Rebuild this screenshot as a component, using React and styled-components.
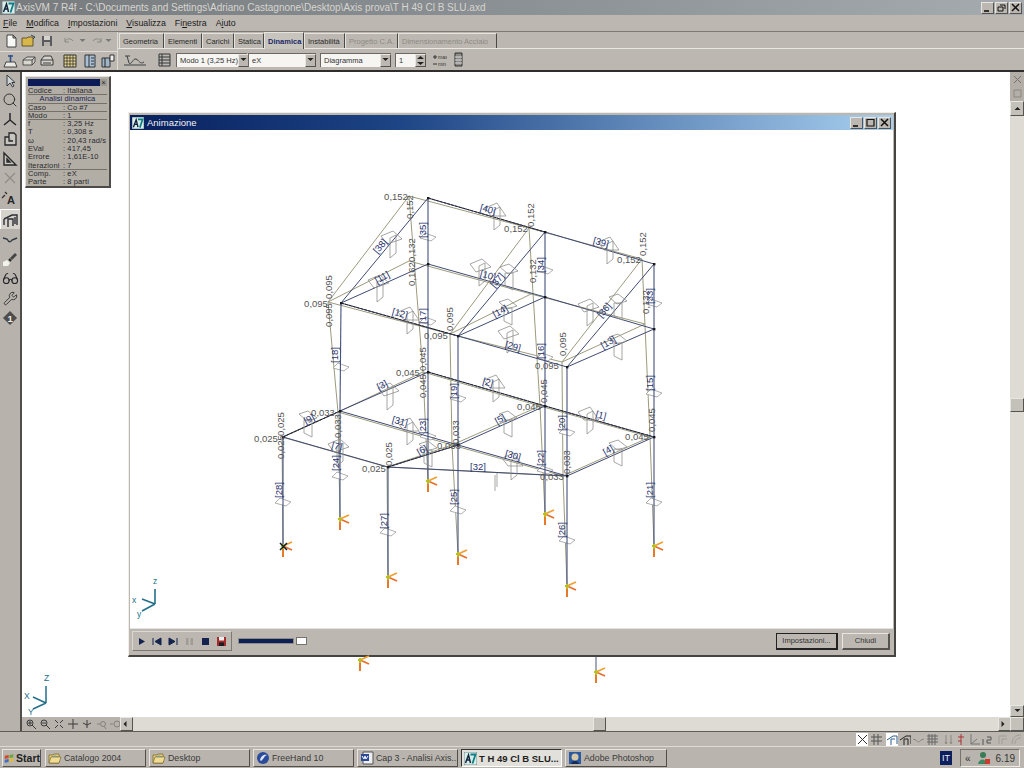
import styled, { createGlobalStyle } from "styled-components";
import { Search, Wrench, Glasses } from "lucide-react";

const GlobalStyle = createGlobalStyle`
  html, body {
    margin: 0;
    padding: 0;
    background: #b9b5ae;
  }
  * {
    box-sizing: border-box;
  }
`;

const FACE = "#bcb8b1";
const LIGHT = "#dedbd4";
const SHADOW = "#7d7a74";
const FONT = `"Liberation Sans", Arial, sans-serif`;

const raised = `
  border-top: 1px solid #e8e6e0;
  border-left: 1px solid #e8e6e0;
  border-right: 1px solid #55534f;
  border-bottom: 1px solid #55534f;
`;

const Screen = styled.div`
  width: 1024px;
  height: 768px;
  overflow: hidden;
  display: flex;
  flex-direction: column;
  background: ${FACE};
  font-family: ${FONT};
`;

const TitleBar = styled.div`
  height: 15px;
  display: flex;
  align-items: center;
  gap: 1px;
  padding: 0 2px;
  background: linear-gradient(90deg, #777b7e, #8f9599 60%, #a5abae);
`;

const TitleText = styled.div`
  flex: 1;
  color: #d7d5cf;
  font-size: 10px;
  white-space: nowrap;
`;

const CaptionButton = styled.div`
  width: 13px;
  height: 12px;
  display: flex;
  align-items: center;
  justify-content: center;
  background: ${FACE};
  ${raised}
`;

const MenuBar = styled.div`
  height: 16px;
  display: flex;
  align-items: center;
  padding-left: 3px;
  gap: 9px;
  font-size: 8.8px;
  color: #1c1c1c;
  & u {
    text-decoration: underline;
  }
`;

const Toolbars = styled.div`
  height: 41px;
  display: flex;
  border-top: 1px solid ${SHADOW};
  border-bottom: 2px solid #2f2e2c;
`;

const ToolGrid = styled.div`
  width: 118px;
  display: flex;
  flex-direction: column;
  border-right: 1px solid ${LIGHT};
`;

const ToolRow = styled.div`
  height: ${(p) => p.$h || 19}px;
  display: flex;
  align-items: center;
  padding-left: 2px;
  border-top: ${(p) => (p.$line ? `1px solid ${LIGHT}` : "none")};
`;

const Slot = styled.div`
  width: ${(p) => p.$w || 18}px;
  flex: none;
  height: 17px;
  display: flex;
  align-items: center;
  justify-content: center;
  margin-left: ${(p) => p.$ml || 0}px;
`;

const RightTools = styled.div`
  flex: 1;
  display: flex;
  flex-direction: column;
`;

const TabRow = styled.div`
  height: 17px;
  display: flex;
  align-items: flex-end;
  padding-left: 1px;
  border-bottom: 1px solid #e9e7e2;
`;

const Tab = styled.div`
  width: ${(p) => p.$w}px;
  height: ${(p) => (p.$active ? 17 : 15)}px;
  margin-bottom: ${(p) => (p.$active ? -1 : 0)}px;
  display: flex;
  align-items: center;
  padding-left: 3px;
  font-size: 7.5px;
  white-space: nowrap;
  font-weight: ${(p) => (p.$active ? 700 : 400)};
  color: ${(p) => (p.$active ? "#1c2a68" : p.$off ? "#8d8a85" : "#2a2a2a")};
  background: ${(p) => (p.$active ? "#c7c4bd" : FACE)};
  border-left: 1px solid #e5e3dd;
  border-top: 1px solid #e5e3dd;
  border-right: 1px solid #4a4946;
`;

const OptionRow = styled.div`
  flex: 1;
  display: flex;
  align-items: center;
  padding-left: 4px;
`;

const Combo = styled.div`
  width: ${(p) => p.$w}px;
  height: 14px;
  margin-left: ${(p) => p.$ml || 0}px;
  flex: none;
  display: flex;
  align-items: center;
  justify-content: space-between;
  padding-left: 3px;
  background: #f6f5f2;
  font-size: 7.5px;
  color: #333;
  white-space: nowrap;
  border-top: 1px solid #6a6864;
  border-left: 1px solid #6a6864;
`;

const ComboArrow = styled.div`
  width: 11px;
  height: 13px;
  flex: none;
  display: flex;
  align-items: center;
  justify-content: center;
  background: ${FACE};
  ${raised}
`;

const Workspace = styled.div`
  flex: 1;
  min-height: 0;
  display: flex;
`;

const LeftTools = styled.div`
  width: 22px;
  flex: none;
  display: flex;
  flex-direction: column;
  align-items: center;
  background: #b7b3ac;
  border-right: 2px solid #4f4e4b;
`;

const LeftTool = styled.div`
  width: 20px;
  height: ${(p) => p.$h || 20}px;
  flex: none;
  display: flex;
  align-items: center;
  justify-content: center;
  background: ${(p) => (p.$active ? "#d6d3cc" : "transparent")};
  border-top: ${(p) => (p.$active ? "1px solid #fff" : "none")};
  border-left: ${(p) => (p.$active ? "1px solid #fff" : "none")};
`;

const CenterColumn = styled.div`
  flex: 1;
  min-width: 0;
  display: flex;
  flex-direction: column;
`;

const Canvas = styled.div`
  flex: 1;
  position: relative;
  background: #fff;
  overflow: hidden;
`;

const InfoPanel = styled.div`
  position: absolute;
  left: 3px;
  top: 4px;
  width: 86px;
  height: 112px;
  padding: 2px;
  background: #b2aea6;
  border-right: 2px solid #4c4b48;
  border-bottom: 2px solid #4c4b48;
  border-top: 1px solid #e4e2dc;
  border-left: 1px solid #e4e2dc;
  font-size: 7.5px;
  color: #2a2a2e;
`;

const InfoHead = styled.div`
  height: 7px;
  margin-bottom: 1px;
  background: #0b1c56;
  display: flex;
  justify-content: flex-end;
`;

const InfoClose = styled.div`
  width: 7px;
  background: #9d9a93;
  color: #222;
  font-size: 7px;
  line-height: 7px;
  text-align: center;
`;

const InfoRow = styled.div`
  height: 8.3px;
  line-height: 8.3px;
  display: grid;
  grid-template-columns: ${(p) => (p.$center ? "1fr" : "35px 1fr")};
  letter-spacing: 0.1px;
  white-space: nowrap;
  text-align: ${(p) => (p.$center ? "center" : "left")};
  color: ${(p) => (p.$center ? "#1b2350" : "inherit")};
  border-bottom: ${(p) => (p.$line ? "1px solid #74716b" : "none")};
`;

const AnimWindow = styled.div`
  position: absolute;
  left: 106px;
  top: 40px;
  width: 768px;
  height: 545px;
  display: flex;
  flex-direction: column;
  padding: 2px 1px;
  background: ${FACE};
  border-right: 2px solid #454441;
  border-bottom: 2px solid #454441;
  border-left: 1px solid #efeee9;
  border-top: 1px solid #efeee9;
`;

const AnimTitle = styled.div`
  height: 15px;
  flex: none;
  display: flex;
  align-items: center;
  gap: 1px;
  padding: 0 2px;
  background: linear-gradient(90deg, #08205e, #1d4484 35%, #a8d0f0);
  color: #f4f4f4;
  font-size: 9.5px;
`;

const AnimTitleText = styled.div`
  flex: 1;
  padding-left: 2px;
`;

const ModelArea = styled.div`
  flex: 1;
  min-height: 0;
  background: #fff;
`;

const ControlBar = styled.div`
  height: 25px;
  flex: none;
  display: flex;
  align-items: center;
  padding: 0 3px 0 2px;
  border-top: 1px solid #e4e2dc;
  background: ${FACE};
`;

const PlayerPanel = styled.div`
  height: 20px;
  width: 100px;
  display: flex;
  align-items: center;
  border-top: 1px solid #dad8d2;
  border-left: 1px solid #dad8d2;
  border-right: 1px solid ${SHADOW};
  border-bottom: 1px solid ${SHADOW};
`;

const PlayerSlot = styled.div`
  width: 16px;
  height: 16px;
  flex: none;
  display: flex;
  align-items: center;
  justify-content: center;
`;

const SliderTrack = styled.div`
  width: 56px;
  height: 6px;
  margin-left: 6px;
  background: #0d1f55;
  border: 1px solid #8f8c86;
`;

const SliderThumb = styled.div`
  width: 11px;
  height: 8px;
  margin-left: 2px;
  background: #fff;
  border: 1px solid #76736d;
`;

const Spacer = styled.div`
  flex: ${(p) => (p.$h ? `0 0 ${p.$h}px` : 1)};
`;

const WinButton = styled.div`
  width: ${(p) => p.$w}px;
  height: 17px;
  margin-left: ${(p) => p.$ml || 0}px;
  display: flex;
  align-items: center;
  justify-content: center;
  font-size: 7.5px;
  color: #333;
  background: ${FACE};
  border-top: 1px solid ${(p) => (p.$def ? "#222" : "#e8e6e0")};
  border-left: 1px solid ${(p) => (p.$def ? "#222" : "#e8e6e0")};
  border-right: ${(p) => (p.$def ? "2px solid #222" : "2px solid #55534f")};
  border-bottom: ${(p) => (p.$def ? "2px solid #222" : "2px solid #55534f")};
`;

const StrayPin = styled.svg`
  position: absolute;
  left: ${(p) => p.$x}px;
  top: ${(p) => p.$y}px;
`;

const CornerTriad = styled.svg`
  position: absolute;
  left: 0;
  bottom: 0;
`;

const HScroll = styled.div`
  height: 14px;
  flex: none;
  display: flex;
  background: ${LIGHT};
`;

const ViewTools = styled.div`
  width: 98px;
  flex: none;
  display: flex;
  align-items: center;
  padding-left: 2px;
  background: #b7b3ac;
`;

const ViewTool = styled.div`
  width: 14px;
  height: 13px;
  flex: none;
  display: flex;
  align-items: center;
  justify-content: center;
`;

const ScrollButton = styled.div`
  width: ${(p) => p.$w || 13}px;
  height: ${(p) => p.$h || 14}px;
  flex: none;
  display: flex;
  align-items: center;
  justify-content: center;
  background: #c4c1ba;
  margin-left: ${(p) => p.$ml || 0}px;
  ${raised}
`;

const VScroll = styled.div`
  width: 14px;
  flex: none;
  display: flex;
  flex-direction: column;
  background: ${LIGHT};
`;

const VHead = styled.div`
  height: 29px;
  flex: none;
  display: flex;
  flex-direction: column;
  background: #b3afa8;
`;

const VHeadItem = styled.div`
  height: 14px;
  display: flex;
  align-items: center;
  justify-content: center;
`;

const StatusBar = styled.div`
  height: 16px;
  flex: none;
  display: flex;
  align-items: center;
  padding-left: 22px;
  background: ${FACE};
  border-top: 1px solid #5e5c58;
  border-bottom: 1px solid #dedbd4;
`;

const StatusIcon = styled.div`
  width: ${(p) => p.$w || 12}px;
  height: 13px;
  flex: none;
  margin-left: ${(p) => p.$ml || 0}px;
  display: flex;
  align-items: center;
  justify-content: center;
  background: ${(p) => (p.$on ? "#fff" : "transparent")};
`;

const Taskbar = styled.div`
  height: 21px;
  flex: none;
  display: flex;
  align-items: center;
  padding: 1px 4px 0 2px;
  background: #b9b5ae;
`;

const StartButton = styled.div`
  width: 39px;
  height: 18px;
  display: flex;
  align-items: center;
  gap: 2px;
  padding-left: 1px;
  font-size: 10.5px;
  font-weight: 700;
  color: #222;
  ${raised}
`;

const TaskButton = styled.div`
  width: ${(p) => p.$w || 101}px;
  height: 18px;
  margin-left: ${(p) => p.$ml || 3}px;
  flex: none;
  display: flex;
  align-items: center;
  gap: 2px;
  padding-left: 2px;
  font-size: ${(p) => (p.$active ? 9.5 : 8.8)}px;
  font-weight: ${(p) => (p.$active ? 700 : 400)};
  white-space: nowrap;
  overflow: hidden;
  color: ${(p) => (p.$active ? "#1e1e1e" : "#3a3a3a")};
  background: ${(p) => (p.$active ? "#e2e0da" : "transparent")};
  border-top: 1px solid ${(p) => (p.$active ? "#333" : "#e8e6e0")};
  border-left: 1px solid ${(p) => (p.$active ? "#333" : "#e8e6e0")};
  border-right: 1px solid ${(p) => (p.$active ? "#fff" : "#4f4e4a")};
  border-bottom: 1px solid ${(p) => (p.$active ? "#fff" : "#4f4e4a")};
  & > svg {
    flex: none;
  }
`;

const LangBox = styled.div`
  width: 12px;
  height: 14px;
  margin-left: 273px;
  flex: none;
  background: #0c2060;
  color: #f0f0f0;
  font-size: 9px;
  line-height: 14px;
  text-align: center;
`;

const Tray = styled.div`
  width: 60px;
  height: 18px;
  margin-left: 8px;
  flex: none;
  display: flex;
  align-items: center;
  padding-left: 4px;
  gap: 5px;
  font-size: 10px;
  color: #333;
  border-top: 1px solid #77746e;
  border-left: 1px solid #77746e;
  border-right: 1px solid #eeece7;
  border-bottom: 1px solid #eeece7;
`;

const Ico = ({ w = 14, h = 14, children }) => (
  <svg width={w} height={h} viewBox={`0 0 ${w} ${h}`} fill="none">
    {children}
  </svg>
);

const Arrow = ({ dir = "down", c = "#222" }) => {
  const pts = {
    down: "0,0 6,0 3,3",
    up: "0,3 6,3 3,0",
    left: "3,-1 3,5 0,2",
    right: "0,-1 0,5 3,2",
  };
  return (
    <svg width="7" height="6" viewBox="-0.5 -1 7 6">
      <polygon points={pts[dir]} fill={c} />
    </svg>
  );
};

const LogoAV = ({ s = 13 }) => (
  <svg width={s} height={s} viewBox="0 0 13 13">
    <rect width="13" height="13" fill="#d7efe9" stroke="#44515a" strokeWidth="0.6" />
    <path d="M1.5 11 L4.5 3 L6.5 11 M2.8 8 H6" stroke="#16243f" strokeWidth="1.5" fill="none" />
    <path d="M6.5 2.5 H11.5 L8.5 11.5" stroke="#0c7d85" strokeWidth="1.8" fill="none" />
  </svg>
);

const FolderIcon = () => (
  <Ico w={14} h={14}>
    <path d="M1 4 H5 L6 3 H11 V12 H1 Z" fill="#ecd27a" stroke="#7b6a2e" strokeWidth="0.8" />
    <circle cx="7" cy="8" r="3.3" fill="#9cc6e8" stroke="#5b7fa0" strokeWidth="0.6" />
    <path d="M1 12 L3 6 H13 L11 12 Z" fill="#efdc92" stroke="#7b6a2e" strokeWidth="0.7" />
  </Ico>
);

const Support = ({ x, y }) => (
  <g transform={`translate(${x} ${y})`}>
    <path d="M0 1 V11" stroke="#e8792b" strokeWidth="2" />
    <path d="M0 0 L9 -4" stroke="#f0a030" strokeWidth="1.8" />
    <path d="M0 0 L9 4" stroke="#e8702a" strokeWidth="1.8" />
    <path d="M-2 0 H2 M0 -2 V3" stroke="#b9bf20" strokeWidth="2" />
  </g>
);

const TOP = [[428, 199], [545, 233], [654, 265]];
const UP = [[428, 265], [545, 298], [654, 330]];
const FRONT = [[341, 304], [458, 337], [567, 368]];
const LOWB = [[428, 373], [545, 407], [654, 438]];
const LOWM = [[340, 412], [458, 446], [567, 477]];
const LOWF = [[283, 438], [388, 468]];
const BASE = {
  a: [283, 547],
  b: [340, 520],
  c: [388, 578],
  d: [428, 482],
  e: [458, 555],
  f: [545, 515],
  g: [567, 587],
  h: [654, 547],
};

const dTOP = [[409, 197], [529, 229], [642, 260]];
const dUP = [[409, 262], [531, 295], [645, 325]];
const dFRONT = [[328, 303], [450, 335], [562, 363]];
const dLOWB = [[423, 373], [540, 407], [650, 438]];
const dLOWM = [[338, 413], [452, 446], [563, 477]];
const dLOWF = [[282, 438], [387, 468]];

const frameLines = (t, u, f, lb, lm, lf) => [
  [t[0], t[1]], [t[1], t[2]],
  [u[0], u[1]], [u[1], u[2]],
  [f[0], f[1]], [f[1], f[2]],
  [f[0], t[0]], [f[1], t[1]], [f[2], t[2]],
  [f[0], u[0]], [f[1], u[1]], [f[2], u[2]],
  [lb[0], lb[1]], [lb[1], lb[2]],
  [lm[0], lm[1]], [lm[1], lm[2]],
  [lm[0], lb[0]], [lm[1], lb[1]], [lm[2], lb[2]],
  [lf[0], lm[0]], [lf[1], lm[1]], [lf[0], lf[1]], [lf[1], lm[2]],
];

const columns = (t, f, lb, lm, lf) => [
  [t[0], lb[0]], [t[1], lb[1]], [t[2], lb[2]],
  [f[0], lm[0]], [f[1], lm[1]], [f[2], lm[2]],
  [lb[0], BASE.d], [lb[1], BASE.f], [lb[2], BASE.h],
  [lm[0], BASE.b], [lm[1], BASE.e], [lm[2], BASE.g],
  [lf[0], BASE.a], [lf[1], BASE.c],
];

const VALUES_H = [
  ["0,152", 396, 197], ["0,095", 316, 304], ["0,095", 436, 336], ["0,045", 408, 373],
  ["0,033", 323, 413], ["0,025", 266, 439], ["0,025", 374, 469], ["0,033", 449, 446],
  ["0,152", 516, 229], ["0,152", 629, 260], ["0,095", 547, 366], ["0,045", 529, 407],
  ["0,045", 637, 437], ["0,033", 552, 477],
];

const VALUES_V = [
  ["0,152", 409, 208], ["0,095", 328, 288], ["0,095", 328, 316], ["0,132", 411, 251],
  ["0,162", 411, 275], ["0,095", 449, 320], ["0,045", 422, 360], ["0,045", 422, 387],
  ["0,152", 530, 216], ["0,132", 532, 272], ["0,095", 562, 345], ["0,152", 642, 245],
  ["0,132", 645, 303], ["0,045", 543, 392], ["0,045", 651, 421], ["0,033", 337, 427],
  ["0,025", 280, 425], ["0,025", 280, 448], ["0,025", 388, 455], ["0,033", 455, 433],
  ["0,033", 566, 463],
];

const BEAM_LABELS = [
  ["[38]", 380, 247, -50], ["[11]", 382, 278, -28], ["[12]", 400, 314, 15], ["[17]", 422, 317, -90],
  ["[35]", 422, 231, -90], ["[18]", 334, 356, -90], ["[40]", 488, 210, 15], ["[34]", 540, 266, -90],
  ["[39]", 601, 243, 15], ["[33]", 649, 297, -90], ["[10]", 488, 276, 15], ["[37]", 497, 281, -50],
  ["[14]", 500, 312, -30], ["[36]", 604, 311, -50], ["[29]", 513, 347, 15], ["[16]", 540, 352, -90],
  ["[13]", 608, 343, -30], ["[3]", 382, 386, -28], ["[2]", 488, 383, 15], ["[1]", 601, 416, 15],
  ["[5]", 500, 420, -30], ["[31]", 400, 422, 15], ["[23]", 422, 427, -90], ["[19]", 453, 392, -90],
  ["[20]", 561, 424, -90], ["[15]", 649, 384, -90], ["[9]", 309, 420, -28], ["[7]", 337, 447, 15],
  ["[24]", 335, 464, -90], ["[6]", 422, 451, -30], ["[4]", 608, 451, -30], ["[30]", 513, 456, 15],
  ["[22]", 540, 459, -90], ["[32]", 478, 467, 0], ["[28]", 278, 491, -90], ["[27]", 383, 522, -90],
  ["[25]", 453, 498, -90], ["[26]", 561, 531, -90], ["[21]", 649, 491, -90],
];

const COLUMN_MARKS = [
  [341, 368], [428, 238], [545, 271], [654, 304], [428, 322], [545, 358], [458, 399], [567, 433],
  [654, 394], [340, 477], [283, 503], [388, 533], [458, 511], [567, 541], [654, 503], [428, 437], [545, 471],
];

const BEAM_MARKS_A = [
  [393, 244, 1], [380, 288, 1], [410, 320, 0], [497, 216, 0], [610, 250, 0], [510, 339, 1], [482, 272, 1],
  [590, 312, 1], [390, 396, 1], [496, 388, 0], [590, 420, 0], [410, 431, 0], [340, 452, 1], [514, 466, 0],
];

const BEAM_MARKS_B = [
  [511, 280, 0], [620, 310, 0], [510, 315, 0], [620, 350, 0], [510, 427, 0], [620, 456, 0], [310, 427, 0], [430, 457, 0],
];

const line = ([a, b], i, color, width, dash) => (
  <line
    key={i}
    x1={a[0]}
    y1={a[1]}
    x2={b[0]}
    y2={b[1]}
    stroke={color}
    strokeWidth={width}
    strokeDasharray={dash}
  />
);

const Model = () => {
  const nodes = [...TOP, ...UP, ...FRONT, ...LOWB, ...LOWM, ...LOWF];
  return (
    <svg width="764" height="498" viewBox="130 131 764 498" style={{ display: "block" }}>
      {frameLines(dTOP, dUP, dFRONT, dLOWB, dLOWM, dLOWF).map((l, i) => line(l, `d${i}`, "#9c9b7c", 1))}
      {columns(dTOP, dFRONT, dLOWB, dLOWM, dLOWF).map((l, i) => line(l, `dc${i}`, "#9c9b7c", 1))}
      {COLUMN_MARKS.map(([x, y], i) => (
        <polygon
          key={`cm${i}`}
          points={`${x - 8},${y + 1} ${x - 3},${y - 4} ${x + 8},${y} ${x + 3},${y + 4}`}
          fill="#fff"
          stroke="#9a9a98"
          strokeWidth="0.8"
        />
      ))}
      {frameLines(TOP, UP, FRONT, LOWB, LOWM, LOWF).map((l, i) => line(l, `b${i}`, "#3f4a73", 1))}
      {[[LOWB[0], LOWB[1]], [LOWB[1], LOWB[2]], [FRONT[0], FRONT[1]], [TOP[0], TOP[1]], [LOWF[0], LOWM[0]], [LOWF[1], LOWM[1]]].map((l, i) =>
        line(l, `k${i}`, "#25252c", 1, "3 1"),
      )}
      {columns(TOP, FRONT, LOWB, LOWM, LOWF).map((l, i) => line(l, `c${i}`, "#45507c", 1.1))}
      {BEAM_MARKS_A.map(([x, y, k], i) => (
        <g key={`ma${i}`} fill="none" stroke="#8f8f8d" strokeWidth="0.8">
          <polygon points={`${x - 12},${y - 7} ${x},${y - 12} ${x + 9},${y + (k ? -4 : 1)} ${x - 6},${y + 1}`} />
          <polygon points={`${x - 3},${y - 5} ${x + 3},${y - 8} ${x + 3},${y + 10} ${x - 3},${y + 15}`} />
        </g>
      ))}
      {BEAM_MARKS_B.map(([x, y], i) => (
        <g key={`mb${i}`} fill="none" stroke="#8f8f8d" strokeWidth="0.8">
          <polygon points={`${x - 11},${y - 12} ${x - 2},${y - 15} ${x + 7},${y - 8} ${x - 3},${y - 5}`} />
          <polygon points={`${x - 6},${y - 6} ${x + 2},${y - 6} ${x + 2},${y + 11} ${x - 6},${y + 7}`} />
        </g>
      ))}
      {nodes.map(([x, y], i) => (
        <rect key={`n${i}`} x={x - 1} y={y - 1} width="2.4" height="2.4" fill="#1a1a1e" />
      ))}
      {VALUES_H.map(([t, x, y], i) => (
        <text key={`vh${i}`} x={x} y={y + 3.5} textAnchor="middle" fontSize="9.5" fill="#555" fontFamily={FONT}>
          {t}
        </text>
      ))}
      {VALUES_V.map(([t, x, y], i) => (
        <text
          key={`vv${i}`}
          x={x}
          y={y}
          dy="3.5"
          textAnchor="middle"
          fontSize="9.5"
          fill="#555"
          fontFamily={FONT}
          transform={`rotate(-90 ${x} ${y})`}
        >
          {t}
        </text>
      ))}
      {BEAM_LABELS.map(([t, x, y, r], i) => (
        <text
          key={`bl${i}`}
          x={x}
          y={y}
          dy="3.5"
          textAnchor="middle"
          fontSize="9.5"
          fill="#28336e"
          fontFamily={FONT}
          transform={`rotate(${r} ${x} ${y})`}
        >
          {t}
        </text>
      ))}
      <path d="M495 476 V492 M497 474 V488" stroke="#8f8f8d" strokeWidth="0.8" />
      {Object.values(BASE).map(([x, y], i) => (
        <Support key={`s${i}`} x={x} y={y} />
      ))}
      <path d="M280 544 L287 551 M287 544 L280 551" stroke="#10202a" strokeWidth="1.5" />
      <g stroke="#236f8a" strokeWidth="1.6" fill="none">
        <path d="M155 605 V590 M155 605 L142 600 M155 605 L142 612" />
      </g>
      <g fill="#236f8a" fontSize="8.5" fontFamily={FONT}>
        <text x="153" y="585">z</text>
        <text x="132" y="604">x</text>
        <text x="137" y="618">y</text>
      </g>
    </svg>
  );
};

const leftIcons = [
  <Ico key="a"><path d="M4 1 V12 L7 9 L9.5 13 L11 12 L8.8 8.5 H12 Z" fill="#cfd2d0" stroke="#25303a" strokeWidth="0.9" /></Ico>,
  <Search key="b" size={16} color="#2b2b2b" strokeWidth={1.4} />,
  <Ico key="c" w={16} h={16}><path d="M8 1 V8 L2 13 M8 8 L14 13" stroke="#26262a" strokeWidth="1.5" /></Ico>,
  <Ico key="d" w={16} h={16}><path d="M3 6 H7 V2 H12 L14 4 V14 H3 Z M7 6 V10 H11" stroke="#28282a" strokeWidth="1.3" fill="#c9c6bf" /></Ico>,
  <Ico key="e" w={16} h={16}><path d="M2 2 V14 H14 Z M5 8 V11 H8 Z" stroke="#27272a" strokeWidth="1.4" fill="#c9c6bf" /></Ico>,
  <Ico key="f" w={16} h={16}><path d="M3 3 L13 13 M13 3 L3 13" stroke="#8f8c86" strokeWidth="1.2" /></Ico>,
  <Ico key="g" w={18} h={16}>
    <path d="M1 8 L4 5 M4 2 L6 4" stroke="#333" strokeWidth="1.3" />
    <text x="6" y="14" fontSize="11" fontWeight="700" fontFamily={FONT} fill="#26262a">A</text>
  </Ico>,
  <Ico key="h" w={16} h={16}><path d="M1 7 L9 3 H14 V13 M5 15 V7 H10 V14 M1 7 V13 M12 5 V12" stroke="#2e3036" strokeWidth="1.4" fill="none" /></Ico>,
  <Ico key="i" w={16} h={16}><path d="M1 7 L5 8 C7 12 9 11 10 9 L15 7" stroke="#2d3a44" strokeWidth="1.4" /></Ico>,
  <Ico key="j" w={16} h={16}><path d="M8 7 L13 2 L15 4 L10 9 Z" fill="#444" /><path d="M1 15 V11 L5 9 L8 12 L6 15 Z" fill="#f2f1ec" /><path d="M7 8 L9 10" stroke="#222" strokeWidth="2" /></Ico>,
  <Glasses key="k" size={17} color="#26262a" strokeWidth={1.5} />,
  <Wrench key="l" size={15} color="#2a2a2c" strokeWidth={1.4} />,
  <Ico key="m" w={16} h={16}>
    <polygon points="8,1 15,8 8,15 1,8" fill="#4e4d4b" />
    <text x="5.5" y="11.5" fontSize="9.5" fontWeight="700" fontFamily={FONT} fill="#eee">1</text>
  </Ico>,
];

const viewIcons = ["M5 5 m-3 0 a3 3 0 1 0 6 0 a3 3 0 1 0 -6 0 M7 7 L11 11 M3 5 H7 M5 3 V7",
  "M5 5 m-3 0 a3 3 0 1 0 6 0 a3 3 0 1 0 -6 0 M7 7 L11 11 M3 5 H7",
  "M2 2 L5 5 M10 2 L7 5 M2 10 L5 7 M10 10 L7 7",
  "M6 1 V11 M1 6 H11",
  "M6 2 V10 M2 5 L6 7 L10 5",
  "M2 6 H5 M8 6 m-2.5 0 a2.5 2.5 0 1 0 5 0 a2.5 2.5 0 1 0 -5 0 M9 8 L11 11",
  "M8 6 m-3 0 a3 3 0 1 0 6 0 a3 3 0 1 0 -6 0 M1 6 H4"];

const statusIcons = [
  { on: true, ml: 0, d: "M2 2 L11 11 M11 2 L2 11", c: "#333" },
  { ml: 2, d: "M4 1 V12 M8 1 V12 M1 4 H12 M1 8 H12", c: "#555" },
  { on: true, ml: 4, d: "M1 7 L7 3 H11 V11 M5 12 V6 H9", c: "#2a5a8a" },
  { ml: 1, d: "M1 7 L7 3 H12 V11 M5 12 V6 H9 V12", c: "#222" },
  { ml: 1, d: "M1 6 L4 7 C6 10 8 9 9 7 L12 6", c: "#8a8882" },
  { ml: 2, d: "M1 3 H12 M1 6 H12 M1 9 H12 M3 1 V12 M6 1 V12 M9 1 V12", c: "#666" },
  { ml: 4, d: "M4 2 V10 M9 2 V10 M3 9 L4 11 L5 9 M8 9 L9 11 L10 9", c: "#8a8882" },
  { ml: 1, d: "M6 1 V12 M3 4 H9 M3 8 H6", c: "#a33" },
  { ml: 1, d: "M3 1 V11 H12 M3 11 L9 6", c: "#777" },
  { ml: 1, d: "M2 12 V6 M6 4 H10 V7 H6 V10 H10", c: "#555" },
  { ml: 4, d: "M2 11 V3 H10 M5 11 V6 H10", c: "#a09d96" },
  { ml: 1, d: "M2 11 C2 5 5 2 11 2 M5 11 C5 7 7 5 11 5", c: "#a09d96" },
];

const info = [
  ["Codice", ": Italiana"],
  ["Analisi dinamica"],
  ["Caso", ": Co #7"],
  ["Modo", ": 1"],
  ["f", ": 3,25 Hz"],
  ["T", ": 0,308 s"],
  ["ω", ": 20,43 rad/s"],
  ["EVal", ": 417,45"],
  ["Errore", ": 1,61E-10"],
  ["Iterazioni", ": 7"],
  ["Comp.", ": eX"],
  ["Parte", ": 8 parti"],
];

const tabs = [
  ["Geometria", 45],
  ["Elementi", 38],
  ["Carichi", 32],
  ["Statica", 30],
  ["Dinamica", 40, "active"],
  ["Instabilità", 41],
  ["Progetto C.A.", 53, "off"],
  ["Dimensionamento Acciaio", 99, "off"],
];

export default function App() {
  return (
    <Screen>
      <GlobalStyle />
      <TitleBar>
        <LogoAV />
        <TitleText>
          AxisVM 7 R4f - C:\Documents and Settings\Adriano Castagnone\Desktop\Axis prova\T H 49 Cl B SLU.axd
        </TitleText>
        <CaptionButton><Ico w={9} h={9}><path d="M1 8 H6" stroke="#111" strokeWidth="1.6" /></Ico></CaptionButton>
        <CaptionButton><Ico w={9} h={9}><path d="M3 2 H8 V6 M1 4 H6 V8 H1 Z" stroke="#111" strokeWidth="1" /></Ico></CaptionButton>
        <CaptionButton><Ico w={9} h={9}><path d="M1 1 L8 8 M8 1 L1 8" stroke="#111" strokeWidth="1.5" /></Ico></CaptionButton>
      </TitleBar>

      <MenuBar>
        <span><u>F</u>ile</span>
        <span><u>M</u>odifica</span>
        <span><u>I</u>mpostazioni</span>
        <span><u>V</u>isualizza</span>
        <span>Fi<u>n</u>estra</span>
        <span>A<u>i</u>uto</span>
      </MenuBar>

      <Toolbars>
        <ToolGrid>
          <ToolRow $h={19}>
            <Slot><Ico><path d="M3 1 H9 L12 4 V13 H3 Z M9 1 V4 H12" fill="#f8f8f6" stroke="#333" strokeWidth="0.9" /></Ico></Slot>
            <Slot><Ico w={16} h={14}><path d="M1 4 H6 L7 3 H12 V12 H1 Z" fill="#d8b64a" stroke="#4b4020" strokeWidth="0.8" /><path d="M10 1 L14 3 L12 5" stroke="#345" strokeWidth="1" /></Ico></Slot>
            <Slot><Ico><path d="M2 2 H12 V12 H2 Z" fill="#5a5a60" /><path d="M4 2 H10 V6 H4 Z" fill="#d6d3cc" /><path d="M4 8 H10 V12 H4 Z" fill="#b4b1aa" /></Ico></Slot>
            <Slot $ml={5} $w={15}><Ico w={12} h={10}><path d="M2 6 C3 2 8 2 10 5 M2 2 V6 H6" stroke="#8b8a85" strokeWidth="1" /></Ico></Slot>
            <Slot $w={13}><Arrow c="#777" /></Slot>
            <Slot $w={15}><Ico w={12} h={10}><path d="M10 6 C9 2 4 2 2 5 M10 2 V6 H6" stroke="#8b8a85" strokeWidth="1" /></Ico></Slot>
            <Slot $w={9}><Arrow c="#777" /></Slot>
          </ToolRow>
          <ToolRow $h={20} $line>
            <Slot><Ico w={16} h={16}><path d="M3 9 H12 L14 14 H1 Z" fill="#e9e8e3" stroke="#333" strokeWidth="0.9" /><path d="M5 3 H10 M7.5 2 V9" stroke="#2e4f88" strokeWidth="1.6" /></Ico></Slot>
            <Slot><Ico w={16} h={14}><path d="M2 6 L6 3 H14 L11 6 Z M2 6 V11 H11 V6 M11 11 L14 8 V3" fill="#d9d6cf" stroke="#333" strokeWidth="0.8" /></Ico></Slot>
            <Slot><Ico w={16} h={14}><path d="M2 6 L5 2 H12 L14 6 V11 H2 Z M2 6 H14 M4 9 H12" fill="#d4d1ca" stroke="#2c2c2c" strokeWidth="0.9" /></Ico></Slot>
            <Slot $ml={4} $w={20}><Ico><path d="M1 1 H13 V13 H1 Z" fill="#e9d88c" stroke="#333" /><path d="M4 1 V13 M7 1 V13 M10 1 V13 M1 4 H13 M1 7 H13 M1 10 H13" stroke="#333" strokeWidth="0.8" /></Ico></Slot>
            <Slot $w={19}><Ico><path d="M2 1 H12 V13 H2 Z" fill="#a7c0d6" stroke="#333" /><path d="M6 1 V13 M8 4 H11 M8 7 H11 M8 10 H11" stroke="#222" strokeWidth="0.9" /></Ico></Slot>
            <Slot $w={18}><Ico><path d="M1 4 H9 V13 H1 Z" fill="#9fb6c8" stroke="#333" /><path d="M9 1 H13 V7 H9 Z" fill="#eee" stroke="#333" /><path d="M4 4 V13" stroke="#222" /></Ico></Slot>
          </ToolRow>
        </ToolGrid>
        <RightTools>
          <TabRow>
            {tabs.map(([name, w, st]) => (
              <Tab key={name} $w={w} $active={st === "active"} $off={st === "off"}>{name}</Tab>
            ))}
          </TabRow>
          <OptionRow>
            <Slot $w={26}><Ico w={24} h={14}><path d="M1 12 H23 M2 3 H7 M4 3 L6 10 C8 13 10 5 13 6 C16 7 17 12 21 9" stroke="#3c4044" strokeWidth="1" /></Ico></Slot>
            <Slot $ml={8} $w={18}><Ico><path d="M1 1 H12 V13 H1 Z M4 1 V13 M1 4 H12 M1 7 H12 M1 10 H12" stroke="#33363a" strokeWidth="1" /></Ico></Slot>
            <Combo $w={71} $ml={2}>Modo 1 (3,25 Hz)<ComboArrow><Arrow /></ComboArrow></Combo>
            <Combo $w={68} $ml={1}>eX<ComboArrow><Arrow /></ComboArrow></Combo>
            <Combo $w={71} $ml={4}>Diagramma<ComboArrow><Arrow /></ComboArrow></Combo>
            <Combo $w={31} $ml={4}>1<ComboArrow><Ico w={7} h={11}><path d="M0 4 L3.5 1 L7 4 Z M0 7 H7 L3.5 10 Z" fill="#222" /></Ico></ComboArrow></Combo>
            <Slot $ml={6} $w={15}><Ico w={15} h={14}><path d="M1 4 H5 M3 2 V6 M1 11 H5" stroke="#333" strokeWidth="1" /><text x="6" y="6" fontSize="5" fontFamily={FONT} fill="#333">max</text><text x="6" y="13" fontSize="5" fontFamily={FONT} fill="#333">min</text></Ico></Slot>
            <Slot $ml={7} $w={9}><Ico w={9} h={15}><path d="M1 1 H8 V14 H1 Z" fill="#8d8b86" stroke="#333" /><path d="M1 5 H8 M1 8 H8 M1 11 H8" stroke="#ddd" /></Ico></Slot>
          </OptionRow>
        </RightTools>
      </Toolbars>

      <Workspace>
        <LeftTools>
          {leftIcons.map((icon, i) => (
            <LeftTool key={i} $active={i === 7} $h={i === 0 ? 18 : i === 5 ? 18 : i === 6 ? 22 : 19.8}>
              {icon}
            </LeftTool>
          ))}
        </LeftTools>
        <CenterColumn>
          <Canvas>
            <InfoPanel>
              <InfoHead><InfoClose>×</InfoClose></InfoHead>
              {info.map(([k, v], i) => (
                <InfoRow key={k} $center={!v} $line={i < 4 || i === 9}>
                  <span>{k}</span>
                  {v && <span>{v}</span>}
                </InfoRow>
              ))}
            </InfoPanel>

            <AnimWindow>
              <AnimTitle>
                <LogoAV s={12} />
                <AnimTitleText>Animazione</AnimTitleText>
                <CaptionButton><Ico w={9} h={9}><path d="M1 8 H6" stroke="#111" strokeWidth="1.6" /></Ico></CaptionButton>
                <CaptionButton><Ico w={9} h={9}><path d="M1 1.5 H8 V8 H1 Z" stroke="#111" strokeWidth="1.2" /></Ico></CaptionButton>
                <CaptionButton><Ico w={9} h={9}><path d="M1 1 L8 8 M8 1 L1 8" stroke="#111" strokeWidth="1.5" /></Ico></CaptionButton>
              </AnimTitle>
              <ModelArea><Model /></ModelArea>
              <ControlBar>
                <PlayerPanel>
                  <PlayerSlot><Ico w={9} h={9}><path d="M2 1 L8 4.5 L2 8 Z" fill="#15244e" /></Ico></PlayerSlot>
                  <PlayerSlot><Ico w={10} h={9}><path d="M1 1 V8 M9 1 L3 4.5 L9 8 Z" stroke="#15244e" fill="#15244e" /></Ico></PlayerSlot>
                  <PlayerSlot><Ico w={10} h={9}><path d="M9 1 V8 M1 1 L7 4.5 L1 8 Z" stroke="#15244e" fill="#15244e" /></Ico></PlayerSlot>
                  <PlayerSlot><Ico w={9} h={9}><path d="M1 1 H3.5 V8 H1 Z M5.5 1 H8 V8 H5.5 Z" fill="#9f9c95" /></Ico></PlayerSlot>
                  <PlayerSlot><Ico w={9} h={9}><path d="M1 1 H8 V8 H1 Z" fill="#15244e" /></Ico></PlayerSlot>
                  <PlayerSlot><Ico w={11} h={11}><path d="M1 1 H10 V10 H1 Z" fill="#a52a2a" /><path d="M3 1 H8 V4.5 H3 Z" fill="#eee" /><path d="M3 6.5 H8 V10 H3 Z" fill="#1c1c22" /></Ico></PlayerSlot>
                </PlayerPanel>
                <SliderTrack />
                <SliderThumb />
                <Spacer />
                <WinButton $w={62} $def>Impostazioni...</WinButton>
                <WinButton $w={48} $ml={4}>Chiudi</WinButton>
              </ControlBar>
            </AnimWindow>

            <StrayPin $x={333} $y={582} width="16" height="18" viewBox="355 654 16 18">
              <Support x={360} y={660} />
            </StrayPin>
            <StrayPin $x={568} $y={585} width="16" height="28" viewBox="590 657 16 28">
              <path d="M596 657 V670" stroke="#4b5378" />
              <Support x={596} y={672} />
            </StrayPin>

            <CornerTriad width="60" height="50" viewBox="0 0 60 50">
              <path d="M24 36 V19 M24 36 L11 30 M24 36 L11 42" stroke="#236f8a" strokeWidth="1.5" fill="none" />
              <text x="22" y="14" fontSize="8.5" fill="#236f8a" fontFamily={FONT}>Z</text>
              <text x="2" y="32" fontSize="8.5" fill="#236f8a" fontFamily={FONT}>X</text>
              <text x="6" y="48" fontSize="8.5" fill="#236f8a" fontFamily={FONT}>Y</text>
            </CornerTriad>
          </Canvas>
          <HScroll>
            <ViewTools>
              {viewIcons.map((d, i) => (
                <ViewTool key={i}>
                  <Ico w={12} h={12}><path d={d} stroke={i > 4 ? "#85827c" : "#3b3b3d"} strokeWidth="1" /></Ico>
                </ViewTool>
              ))}
            </ViewTools>
            <ScrollButton><Arrow dir="left" /></ScrollButton>
            <ScrollButton $ml={460} />
            <ScrollButton $ml={392}><Arrow dir="right" /></ScrollButton>
          </HScroll>
        </CenterColumn>
        <VScroll>
          <VHead>
            <VHeadItem><Ico w={9} h={9}><path d="M1 1 L8 8 M8 1 L1 8" stroke="#77746e" strokeWidth="1" /></Ico></VHeadItem>
            <VHeadItem><Ico w={9} h={9}><path d="M1 1 H8 V8 H1 Z" stroke="#8b8882" strokeWidth="1" /></Ico></VHeadItem>
          </VHead>
          <ScrollButton $w={14} $h={15}><Arrow dir="up" /></ScrollButton>
          <Spacer $h={282} />
          <ScrollButton $w={14} $h={14} />
          <Spacer />
          <ScrollButton $w={14} $h={12}><Arrow /></ScrollButton>
          <ScrollButton $w={14} $h={14} />
        </VScroll>
      </Workspace>

      <StatusBar>
        <Spacer />
        {statusIcons.map((s, i) => (
          <StatusIcon key={i} $on={s.on} $ml={s.ml}>
            <Ico w={12} h={13}><path d={s.d} stroke={s.c} strokeWidth="1" /></Ico>
          </StatusIcon>
        ))}
        <StatusIcon $w={2} />
      </StatusBar>

      <Taskbar>
        <StartButton>
          <Ico w={13} h={13}>
            <path d="M1 3 L6 2 V6 L1 7 Z" fill="#d2492a" />
            <path d="M7 2 L12 1 V5 L7 6 Z" fill="#6aa63a" />
            <path d="M1 8 L6 7 V11 L1 12 Z" fill="#3b6fc4" />
            <path d="M7 7 L12 6 V10 L7 11 Z" fill="#e6b92f" />
          </Ico>
          Start
        </StartButton>
        <TaskButton $ml={4}><FolderIcon />Catalogo 2004</TaskButton>
        <TaskButton><FolderIcon />Desktop</TaskButton>
        <TaskButton>
          <Ico><circle cx="7" cy="7" r="6" fill="#2c4a9a" /><path d="M4 9 C5 4 9 3 11 4 C8 5 8 8 5 10" fill="#dfe6f4" /></Ico>
          FreeHand 10
        </TaskButton>
        <TaskButton>
          <Ico><path d="M3 1 H13 V13 H3 Z" fill="#eee" stroke="#555" /><path d="M1 3 H9 V10 H1 Z" fill="#2c4a9a" /><path d="M2 5 L4 8 L5 5 L6 8 L8 5" stroke="#fff" /></Ico>
          Cap 3 - Analisi Axis...
        </TaskButton>
        <TaskButton $active><LogoAV />T H 49 Cl B SLU...</TaskButton>
        <TaskButton $w={102}>
          <Ico><rect x="1" y="1" width="12" height="12" fill="#2c5aa0" /><circle cx="7" cy="6" r="3.5" fill="#d8c9a8" /><path d="M3 13 C4 9 10 9 11 13 Z" fill="#172b52" /></Ico>
          Adobe Photoshop
        </TaskButton>
        <LangBox>IT</LangBox>
        <Tray>
          <span>«</span>
          <Ico w={15} h={14}><circle cx="7" cy="4" r="3" fill="#3b7a57" /><path d="M2 13 C3 7 10 7 11 13 Z" fill="#3c8a62" /><rect x="9" y="8" width="5" height="5" fill="#cf3a2e" /></Ico>
          <span>6.19</span>
        </Tray>
      </Taskbar>
    </Screen>
  );
}
